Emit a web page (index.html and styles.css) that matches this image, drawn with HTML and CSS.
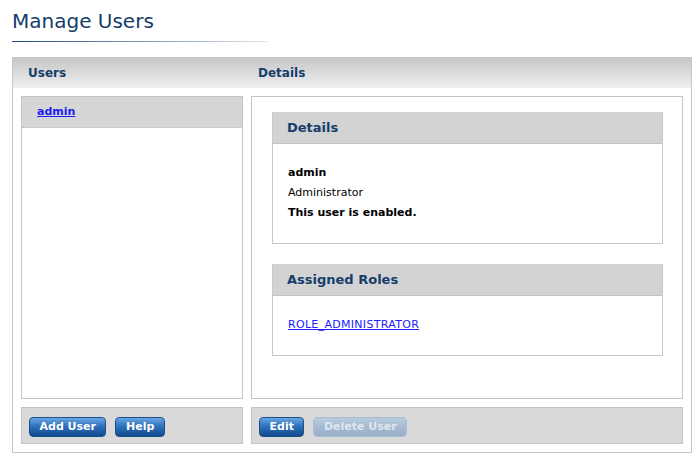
FILE: index.html
```html
<!DOCTYPE html>
<html>
<head>
<meta charset="utf-8">
<title>Manage Users</title>
<link rel="stylesheet" href="styles.css">
</head>
<body>
<h1 class="page-title">Manage Users</h1>
<div class="panel">
  <div class="panel-head">
    <div class="panel-head-cell">Users</div>
    <div class="panel-head-cell">Details</div>
  </div>
  <div class="panel-body">
    <div class="box user-list">
      <div class="user-row"><a href="#" class="user-link">admin</a></div>
    </div>
    <div class="box detail-box">
      <div class="section">
        <div class="section-head">Details</div>
        <div class="section-body">
          <div class="strong">admin</div>
          <div>Administrator</div>
          <div class="strong">This user is enabled.</div>
        </div>
      </div>
      <div class="section">
        <div class="section-head">Assigned Roles</div>
        <div class="section-body">
          <a href="#" class="role-link">ROLE_ADMINISTRATOR</a>
        </div>
      </div>
    </div>
    <div class="toolbar">
      <button class="btn">Add User</button>
      <button class="btn">Help</button>
    </div>
    <div class="toolbar">
      <button class="btn">Edit</button>
      <button class="btn" disabled>Delete User</button>
    </div>
  </div>
</div>
</body>
</html>
```
FILE: styles.css
```css
* { box-sizing: border-box; }
body {
  margin: 0;
  font-family: "DejaVu Sans", Verdana, sans-serif;
  font-size: 11px;
  color: #000;
  background: #fff;
}
.page-title {
  margin: 9px 0 0 12px;
  width: 255px;
  padding-bottom: 9px;
  font-size: 20px;
  line-height: 24px;
  font-weight: normal;
  color: #163d6b;
  background: linear-gradient(to right, #1d4b82, #8ea6c2 60%, #e2e4e8) left bottom / 100% 1px no-repeat;
}
.panel {
  margin: 15px 0 0 12px;
  width: 680px;
  border: 1px solid #c6c6c6;
}
.panel-head {
  display: grid;
  grid-template-columns: 222px 432px;
  column-gap: 8px;
  padding: 0 8px;
  height: 30px;
  background: linear-gradient(to bottom, #c6c6c6, #f0f0f0);
}
.panel-head-cell {
  padding-left: 7px;
  line-height: 30px;
  font-size: 12px;
  font-weight: bold;
  color: #163d6b;
}
.panel-body {
  display: grid;
  grid-template-columns: 222px 432px;
  grid-template-rows: 303px 37px;
  gap: 8px;
  padding: 8px;
}
.box {
  border: 1px solid #c4c4c4;
  background: #fff;
}
.user-row {
  height: 31px;
  padding-left: 15px;
  line-height: 30px;
  background: #d6d6d6;
  border-bottom: 1px dotted #bdbdbd;
}
.user-link {
  font-weight: bold;
  color: #1c1cf0;
}
.detail-box {
  padding: 15px 19px 0 20px;
}
.section {
  border: 1px solid #c8c8c8;
  border-top-color: #d3d3d3;
  margin-bottom: 20px;
}
.section-head {
  height: 31px;
  line-height: 30px;
  padding-left: 14px;
  font-size: 13px;
  font-weight: bold;
  color: #163d6b;
  background: #d3d3d3;
  border-bottom: 1px solid #c2c2c2;
}
.section-body {
  padding: 19px 15px 20px;
  line-height: 20px;
}
.strong { font-weight: bold; }
.role-link { color: #2020ff; letter-spacing: 0.3px; }
.toolbar {
  display: flex;
  gap: 9px;
  padding: 9px 7px 0;
  background: #d9d9d9;
  border: 1px solid #c4c4c4;
}
.btn {
  height: 20px;
  padding: 0 9.5px;
  border: 1px solid #1a4f8c;
  border-radius: 4px;
  font-family: "DejaVu Sans", Verdana, sans-serif;
  font-size: 11px;
  font-weight: bold;
  color: #fff;
  line-height: 18px;
  background: linear-gradient(to bottom, #6aa6e2 0%, #2f72bd 45%, #0f4a8e 100%);
  cursor: pointer;
}
.btn:disabled {
  color: #dfe6ee;
  border-color: #a8bccf;
  background: linear-gradient(to bottom, #b8cbe0 0%, #a6bbd2 50%, #97aec8 100%);
  cursor: default;
}
```
